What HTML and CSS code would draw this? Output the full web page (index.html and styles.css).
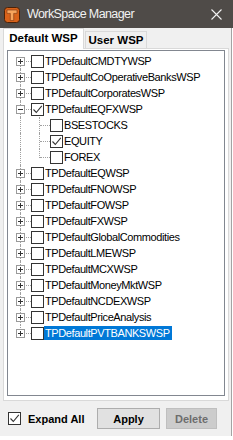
FILE: index.html
```html
<!DOCTYPE html>
<html>
<head>
<meta charset="utf-8">
<link rel="stylesheet" href="styles.css">
</head>
<body>
<div class="titlebar">
  <svg class="app-icon" width="16" height="16" viewBox="0 0 16 16">
    <rect x="0.5" y="0.5" width="15" height="15" rx="3" fill="#d8621a" stroke="#4a2208"/>
    <path d="M3 3h10v3.4h-3.3V13.5H6.3V6.4H3z" fill="#f7a65e" stroke="#7a3510" stroke-width="0.6"/>
  </svg>
  <span class="title">WorkSpace Manager</span>
  <svg class="close" width="11" height="11" viewBox="0 0 11 11">
    <path d="M0.5 0.5L10.5 10.5M10.5 0.5L0.5 10.5" stroke="#f2f2f2" stroke-width="1.1"/>
  </svg>
</div>
<div class="client">
  <div class="tabs">
    <div class="tab active">Default WSP</div>
    <div class="tab">User WSP</div>
  </div>
  <div class="page">
    <div class="tree">
      <div class="row"><span class="cell last down"><span class="exp plus"></span></span><span class="cb"></span><span class="label">TPDefaultCMDTYWSP</span></div>
      <div class="row"><span class="cell last full"><span class="exp plus"></span></span><span class="cb"></span><span class="label">TPDefaultCoOperativeBanksWSP</span></div>
      <div class="row"><span class="cell last full"><span class="exp plus"></span></span><span class="cb"></span><span class="label">TPDefaultCorporatesWSP</span></div>
      <div class="row"><span class="cell last full"><span class="exp"></span></span><span class="cb checked"><svg width="11" height="11" viewBox="0 0 11 11"><path d="M1.5 5.5L4.3 8.5L9.8 1.8" fill="none" stroke="#333" stroke-width="1.1"/></svg></span><span class="label">TPDefaultEQFXWSP</span></div>
      <div class="row"><span class="cell pass full"></span><span class="cell last full"></span><span class="cb"></span><span class="label">BSESTOCKS</span></div>
      <div class="row"><span class="cell pass full"></span><span class="cell last full"></span><span class="cb checked"><svg width="11" height="11" viewBox="0 0 11 11"><path d="M1.5 5.5L4.3 8.5L9.8 1.8" fill="none" stroke="#333" stroke-width="1.1"/></svg></span><span class="label">EQUITY</span></div>
      <div class="row"><span class="cell pass full"></span><span class="cell last up"></span><span class="cb"></span><span class="label">FOREX</span></div>
      <div class="row"><span class="cell last full"><span class="exp plus"></span></span><span class="cb"></span><span class="label">TPDefaultEQWSP</span></div>
      <div class="row"><span class="cell last full"><span class="exp plus"></span></span><span class="cb"></span><span class="label">TPDefaultFNOWSP</span></div>
      <div class="row"><span class="cell last full"><span class="exp plus"></span></span><span class="cb"></span><span class="label">TPDefaultFOWSP</span></div>
      <div class="row"><span class="cell last full"><span class="exp plus"></span></span><span class="cb"></span><span class="label">TPDefaultFXWSP</span></div>
      <div class="row"><span class="cell last full"><span class="exp plus"></span></span><span class="cb"></span><span class="label">TPDefaultGlobalCommodities</span></div>
      <div class="row"><span class="cell last full"><span class="exp plus"></span></span><span class="cb"></span><span class="label">TPDefaultLMEWSP</span></div>
      <div class="row"><span class="cell last full"><span class="exp plus"></span></span><span class="cb"></span><span class="label">TPDefaultMCXWSP</span></div>
      <div class="row"><span class="cell last full"><span class="exp plus"></span></span><span class="cb"></span><span class="label">TPDefaultMoneyMktWSP</span></div>
      <div class="row"><span class="cell last full"><span class="exp plus"></span></span><span class="cb"></span><span class="label">TPDefaultNCDEXWSP</span></div>
      <div class="row"><span class="cell last full"><span class="exp plus"></span></span><span class="cb"></span><span class="label">TPDefaultPriceAnalysis</span></div>
      <div class="row"><span class="cell last up"><span class="exp plus"></span></span><span class="cb"></span><span class="label selected">TPDefaultPVTBANKSWSP</span></div>
    </div>
  </div>
  <div class="bottom">
    <label class="expand"><span class="cb checked"><svg width="11" height="11" viewBox="0 0 11 11"><path d="M1.5 5.5L4.3 8.5L9.8 1.8" fill="none" stroke="#333" stroke-width="1.1"/></svg></span><span class="expand-text">Expand All</span></label>
    <button class="btn apply">Apply</button>
    <button class="btn delete" disabled>Delete</button>
  </div>
</div>
</body>
</html>
```
FILE: styles.css
```css
* { box-sizing: border-box; margin: 0; padding: 0; }
html, body { width: 233px; height: 440px; overflow: hidden; background: #ffffff; }
body { font-family: "Liberation Sans", Arial, sans-serif; color: #000; }

.titlebar {
  height: 28px;
  background: #4f4b48;
  display: flex;
  align-items: center;
  padding-left: 4px;
}
.app-icon { flex: none; margin-right: 7px; margin-top: 1px; }
.title {
  flex: 1;
  font-family: "Liberation Sans", Arial, sans-serif;
  font-size: 12.5px;
  letter-spacing: -0.6px;
  color: #f2f2f2;
  white-space: nowrap;
}
.close { flex: none; margin-right: 11px; }

.client {
  width: 232px;
  height: 408px;
  background: #f0f0f0;
  border-right: 1px solid #a3a3a3;
  display: flex;
  flex-direction: column;
}

.tabs {
  height: 20px;
  display: flex;
  align-items: flex-end;
  padding-left: 3px;
  position: relative;
  z-index: 1;
}
.tab {
  height: 17px;
  width: 62px;
  margin-left: 1px;
  border: 1px solid #d9d9d9;
  border-bottom: none;
  background: #f0f0f0;
  font-weight: bold;
  font-size: 11.5px;
  line-height: 16px;
  text-align: center;
}
.tab.active {
  height: 21px;
  width: 81px;
  margin-left: 0;
  margin-bottom: -1px;
  background: #ffffff;
  line-height: 18px;
  padding-bottom: 2px;
}

.page {
  margin-left: 3px;
  width: 226px;
  height: 353px;
  border: 1px solid #d9d9d9;
  background: #ffffff;
  padding: 1px 3px 4px 3px;
}
.tree {
  height: 346px;
  border: 1px solid #828790;
  background: #ffffff;
  padding-top: 2px;
}
.row {
  height: 16px;
  display: flex;
  align-items: center;
}
.cell {
  flex: none;
  width: 19px;
  height: 16px;
  position: relative;
}
.cell.last { width: 23px; }
.cell::before {
  content: "";
  position: absolute;
  left: 12px;
  border-left: 1px dotted #a0a0a0;
}
.cell.full::before { top: 0; bottom: 0; }
.cell.down::before { top: 8px; bottom: 0; }
.cell.up::before { top: 0; height: 9px; }
.cell.last::after {
  content: "";
  position: absolute;
  left: 13px;
  right: 0;
  top: 8px;
  border-top: 1px dotted #a0a0a0;
}
.exp {
  position: absolute;
  left: 8px;
  top: 4px;
  width: 9px;
  height: 9px;
  border: 1px solid #9a9a9a;
  background: #fff;
  z-index: 1;
}
.exp::before {
  content: "";
  position: absolute;
  left: 1px;
  top: 3px;
  width: 5px;
  height: 1px;
  background: #333;
}
.exp.plus::after {
  content: "";
  position: absolute;
  left: 3px;
  top: 1px;
  width: 1px;
  height: 5px;
  background: #333;
}

.cb {
  flex: none;
  width: 13px;
  height: 13px;
  border: 1px solid #333;
  background: #fff;
  display: flex;
  align-items: center;
  justify-content: center;
}
.cb svg { display: block; }
.label {
  font-size: 11px;
  line-height: 14px;
  height: 14px;
  padding: 0 2px 0 1px;
  letter-spacing: -0.4px;
  white-space: nowrap;
}
.label.selected { background: #0078d7; color: #fff; }

.bottom {
  flex: 1;
  display: flex;
  align-items: center;
  padding-left: 8px;
}
.expand {
  width: 89px;
  display: flex;
  align-items: center;
}
.expand-text {
  margin-left: 7px;
  font-weight: bold;
  font-size: 11px;
}
.btn {
  height: 21px;
  font-family: "Liberation Sans", Arial, sans-serif;
  font-weight: bold;
  font-size: 11px;
}
.apply {
  width: 63px;
  background: #e1e1e1;
  border: 1px solid #adadad;
  color: #000;
}
.delete {
  width: 51px;
  margin-left: 6px;
  background: #cccccc;
  border: 1px solid #bfbfbf;
  color: #6d6d6d;
}
```
